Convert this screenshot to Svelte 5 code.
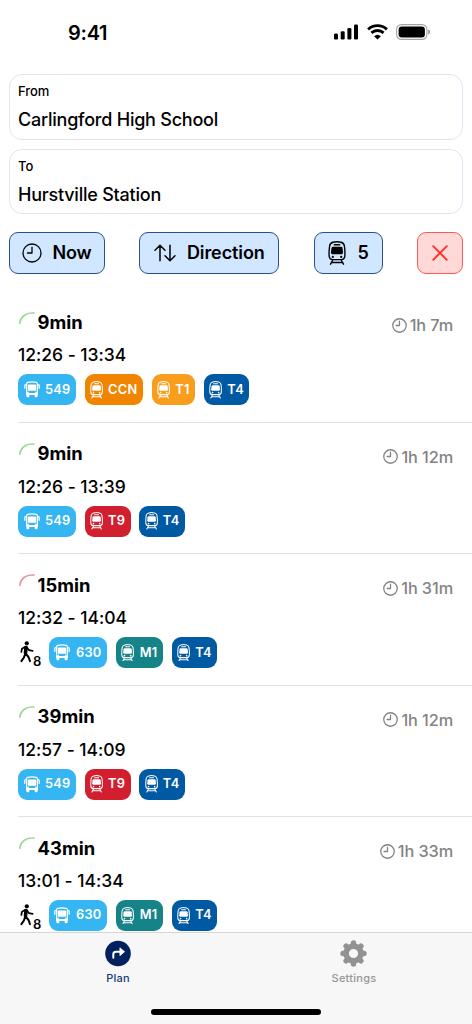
<script>
  const colors = {
    bus: '#35b5f1', CCN: '#f18500', T1: '#f99d1c', T4: '#005aa3', T9: '#d11f2f', M1: '#168388'
  };
  const bus = (label) => ({ label, kind: 'bus', color: colors.bus, width: 58 });
  const train = (label, width) => ({ label, kind: 'train', color: colors[label], width });
  const t4 = train('T4', 45.6);
  const green = '#9fd895';
  const trips = [
    { wait: '9min', time: '12:26 - 13:34', total: '1h 7m', tone: green, legs: [bus('549'), train('CCN', 58.2), train('T1', 43.6), t4] },
    { wait: '9min', time: '12:26 - 13:39', total: '1h 12m', tone: green, legs: [bus('549'), train('T9', 46), t4] },
    { wait: '15min', time: '12:32 - 14:04', total: '1h 31m', tone: '#e19a9f', walk: 8, legs: [bus('630'), train('M1', 47.3), t4] },
    { wait: '39min', time: '12:57 - 14:09', total: '1h 12m', tone: green, legs: [bus('549'), train('T9', 46), t4] },
    { wait: '43min', time: '13:01 - 14:34', total: '1h 33m', tone: green, walk: 8, legs: [bus('630'), train('M1', 47.3), t4] }
  ];
  const teeth = [0, 45, 90, 135, 180, 225, 270, 315];
</script>

{#snippet clock(size, stroke)}
  <svg width={size} height={size} viewBox="0 0 20 20" fill="none" stroke="currentColor" stroke-width={stroke} stroke-linecap="round" stroke-linejoin="round">
    <circle cx="10" cy="10" r="9" /><path d="M10 4.2V10H5.500" />
  </svg>
{/snippet}

{#snippet tram(w, h)}
  <svg width={w} height={h} viewBox="0 0 18 24" fill="none" stroke="currentColor" stroke-width="1.4" stroke-linecap="round">
    <path d="M5 1.200Q9 .2 13 1.200Q16 2 16.400 5Q17.200 11 16.800 15.500Q16.400 18.600 13.500 18.600H4.500Q1.600 18.600 1.200 15.500Q.8 11 1.600 5Q2 2 5 1.200Z" />
    <path d="M6.300 3.700h5.400" />
    <path d="M5 5.700h8q1.300 0 1.500 1.300l.5 4.300q.1 1.900-1.400 1.900H4.400Q2.900 13.200 3 11.300L3.500 7Q3.700 5.700 5 5.700Z" fill="currentColor" stroke="none" />
    <circle cx="4.800" cy="15.900" r="1.100" fill="currentColor" stroke="none" /><circle cx="13.200" cy="15.900" r="1.100" fill="currentColor" stroke="none" />
    <path d="M4.500 19.500L2.500 23.200M13.500 19.500l2 3.700M3.600 21.500h10.800" />
  </svg>
{/snippet}

{#snippet coach()}
  <svg width="16" height="17" viewBox="0 0 16 17" fill="none" stroke="currentColor">
    <path d="M3.700 1.400Q8 .2 12.300 1.400Q13.400 1.700 13.400 2.800V13.300H2.600V2.800Q2.600 1.700 3.700 1.400Z" stroke-width="1.200" stroke-linejoin="round" />
    <path d="M4.400 3.500h7.200q.6 0 .6.6v5q0 .6-.6.6H4.400q-.6 0-.6-.6v-5q0-.6.6-.6Z" fill="currentColor" stroke="none" />
    <path d="M2.600 12.800h10.800M3.300 11.500h1.600M11.100 11.500h1.600" stroke-width="1.400" />
    <path d="M2.400 13h2.900v2.400q0 .8-.8.8H3.300q-.9 0-.9-.9ZM10.700 13h2.900v2.300q0 .9-.9.9h-1.200q-.8 0-.8-.8Z" fill="currentColor" stroke="none" />
    <path d="M2.300 3.300Q.8 3.300.8 4.600v2.700M13.700 3.300q1.500 0 1.500 1.300v2.700" stroke-width="1.300" stroke-linecap="round" />
  </svg>
{/snippet}

<main class="screen">
  <header class="status">
    <span class="clocktime">9:41</span>
    <div class="signals">
      <svg width="25" height="16" viewBox="0 0 25 16"><rect x="0" y="9.600" width="4" height="5.900" rx="1.300" /><rect x="6.700" y="7.200" width="4" height="8.300" rx="1.300" /><rect x="13.400" y="3.900" width="4" height="11.600" rx="1.300" /><rect x="20" y=".4" width="4" height="15.100" rx="1.300" /></svg>
      <svg width="21" height="16" viewBox="0 0 21 16" fill="none" stroke="#000" stroke-width="2.900"><path d="M1.100 5.300Q5.200 1.600 10.500 1.600T19.900 5.300M4.400 8.900Q7.100 6.500 10.500 6.500T16.600 8.900" /><path d="M7.100 12.200Q10.500 9.200 13.900 12.200L10.500 15.600Z" fill="#000" stroke="none" /></svg>
      <svg width="34" height="16" viewBox="0 0 34 16"><rect x=".6" y=".6" width="30.300" height="14.800" rx="4.800" fill="none" stroke="#a5a5a5" stroke-width="1.100" /><rect x="2.600" y="2.600" width="26.300" height="10.800" rx="3.200" /><path d="M32.200 5.300q1.800.8 1.800 2.700t-1.800 2.700Z" fill="#999" /></svg>
    </div>
  </header>

  <section class="fields">
    <div class="field"><small>From</small><span>Carlingford High School</span></div>
    <div class="field"><small>To</small><span>Hurstville Station</span></div>
  </section>

  <nav class="actions">
    <button class="now">{@render clock(20, 1.3)}<span>Now</span></button>
    <button class="direction">
      <svg width="22" height="18" viewBox="0 0 22 18" fill="none" stroke="#000" stroke-width="1.500" stroke-linecap="round" stroke-linejoin="round"><path d="M6 16.700V1.300M1 6.300l5-5 5 5M16 1.300v15.400M11 11.700l5 5 5-5" /></svg>
      <span>Direction</span>
    </button>
    <button class="modes">{@render tram(18, 24)}<span>5</span></button>
    <button class="clear" aria-label="Clear"><svg width="16" height="16" viewBox="0 0 16 16" fill="none" stroke="currentColor" stroke-width="1.900" stroke-linecap="round"><path d="M1.200 1.200l13.600 13.600M14.800 1.200L1.200 14.800" /></svg></button>
  </nav>

  <section class="trips">
    {#each trips as trip}
      <article>
        <div class="top">
          <svg width="20" height="16" viewBox="0 0 20 16" fill="none" stroke={trip.tone} stroke-width="1.700"><path d="M1.700 12.800C2.500 6 7.500 1 16.500 2.200" /></svg>
          <strong>{trip.wait}</strong>
          <div class="total">{@render clock(15, 1.7)}<span>{trip.total}</span></div>
        </div>
        <div class="time">{trip.time}</div>
        <div class="legs">
          {#if trip.walk}
            <div class="walk">
              <svg width="14" height="22" viewBox="0 0 14 22" fill="none" stroke="#000" stroke-linecap="round" stroke-linejoin="round"><circle cx="6.800" cy="2.300" r="2.100" fill="#000" stroke="none" /><path d="M6 6.500L5.500 12" stroke-width="3.600" /><path d="M5 5.900L2 7.800 1.300 11M7 6.500l2 2.700 3.600.6" stroke-width="1.700" /><path d="M5.100 13l-1.200 3.500-2.500 3.600M5.900 12.800l2.600 3.200 1.500 4.100" stroke-width="2" /></svg>
              <span>{trip.walk}</span>
            </div>
          {/if}
          {#each trip.legs as leg}
            <div class="leg" style:background={leg.color} style:width="{leg.width}px">
              {#if leg.kind === 'bus'}{@render coach()}{:else}{@render tram(13.2, 17.6)}{/if}
              <span>{leg.label}</span>
            </div>
          {/each}
        </div>
      </article>
    {/each}
  </section>

  <footer>
    <div class="tabs">
      <div class="tab active">
        <svg width="26" height="26" viewBox="0 0 26 26"><circle cx="13" cy="13" r="12.800" fill="#00205f" /><path d="M8.300 17.300v-3.400q0-2.600 2.600-2.600h4.500" fill="none" stroke="#fff" stroke-width="2" stroke-linecap="round" /><path d="M14.900 7.300v7.900l4.700-4Z" fill="#fff" stroke="#fff" stroke-width=".7" stroke-linejoin="round" /></svg>
        <span>Plan</span>
      </div>
      <div class="tab">
        <svg width="27" height="27" viewBox="0 0 27 27"><g fill="none" stroke="#929292"><circle cx="13.500" cy="13.500" r="7.400" stroke-width="5.600" />{#each teeth as angle}<path d="M13.500 4.800V3" transform="rotate({angle} 13.500 13.500)" stroke-width="5.400" stroke-linecap="round" />{/each}</g></svg>
        <span>Settings</span>
      </div>
    </div>
    <div class="home"></div>
  </footer>
</main>

<style>
  :global(body) { margin: 0; background: #fff; }
  * { box-sizing: border-box; }
  svg { display: block; flex: none; }
  .screen { width: 472px; height: 1024px; overflow: hidden; display: flex; flex-direction: column; font-family: Inter, sans-serif; color: #000; }
  .status { height: 74px; flex: none; display: flex; justify-content: space-between; padding: 22px 42px 0 68px; }
  .clocktime { font-size: 20px; font-weight: 600; line-height: 22px; letter-spacing: -.25px; }
  .signals { display: flex; gap: 8px; padding-top: 2px; }
  .fields { padding: 0 9px; display: flex; flex-direction: column; gap: 9px; flex: none; }
  .field { height: 65.700px; border: 1px solid #e4e2f0; border-radius: 13px; padding: 7px 8px; display: flex; flex-direction: column; }
  .field small { font-size: 13px; line-height: 19px; letter-spacing: -.05px; font-weight: 500; }
  .field span { font-size: 18px; line-height: 24px; margin-top: 7px; font-weight: 500; letter-spacing: -.23px; }
  .actions { height: 42px; flex: none; margin: 17.600px 9px 0; display: flex; justify-content: space-between; }
  button { height: 42px; padding: 0; border: 1.200px solid #2b4f8d; border-radius: 9px; background: #d1e6ff; color: #000; font: 600 18px/24px Inter, sans-serif; letter-spacing: -.1px; display: flex; align-items: center; justify-content: center; }
  button span { margin-top: 1px; }
  .now { width: 96px; gap: 10px; }
  .direction { width: 140px; gap: 11px; }
  .modes { width: 69px; gap: 12px; }
  .clear { width: 46px; background: #ffd9d8; border-color: #ff5b54; color: #ff3127; }
  .trips { height: 658px; flex: none; overflow: hidden; padding-top: 17.400px; }
  article { height: 131.400px; margin-left: 18px; border-bottom: 1px solid #e2e2e3; padding-top: 19.300px; }
  .top { height: 24px; display: flex; }
  strong { font-size: 18.400px; line-height: 24px; font-weight: 700; margin: -.7px 0 0 -.4px; }
  .total { margin: 2.800px 19px 0 auto; height: 24px; display: flex; align-items: center; gap: 3px; color: #838383; white-space: nowrap; }
  .total span { font-size: 16.300px; line-height: 24px; font-weight: 500; letter-spacing: -.1px; }
  .time { font-size: 17.500px; line-height: 24px; margin-top: 8.700px; font-weight: 500; letter-spacing: -.03px; }
  .legs { height: 31px; display: flex; gap: 8.700px; margin-top: 7px; }
  .leg { height: 31px; border-radius: 9px; color: #fff; display: flex; align-items: center; justify-content: space-between; padding: 0 5.500px 0 5.500px; }
  .leg span { font-size: 12.800px; line-height: 20px; font-weight: 600; letter-spacing: .25px; }
  .walk { width: 22.300px; display: flex; padding: 4px 0 0 2px; }
  .walk span { font-size: 13px; line-height: 14px; font-weight: 600; margin: 13px 0 0 -1px; height: 14px; }
  footer { height: 92px; flex: none; background: #f7f7f7; border-top: 1px solid #d6d6d6; }
  .tabs { display: flex; height: 76px; }
  .tab { flex: 1; display: flex; flex-direction: column; align-items: center; padding-top: 7px; color: #969696; }
  .tab svg { height: 27px; margin-left: -1px; }
  .tab span { font-size: 11px; line-height: 16px; margin-top: 3px; font-weight: 500; letter-spacing: .25px; }
  .active { color: #173a78; }
  .active svg { margin-left: 0; }
  .home { height: 6px; width: 170px; margin: 0 auto; border-radius: 3px; background: #000; }
</style>
